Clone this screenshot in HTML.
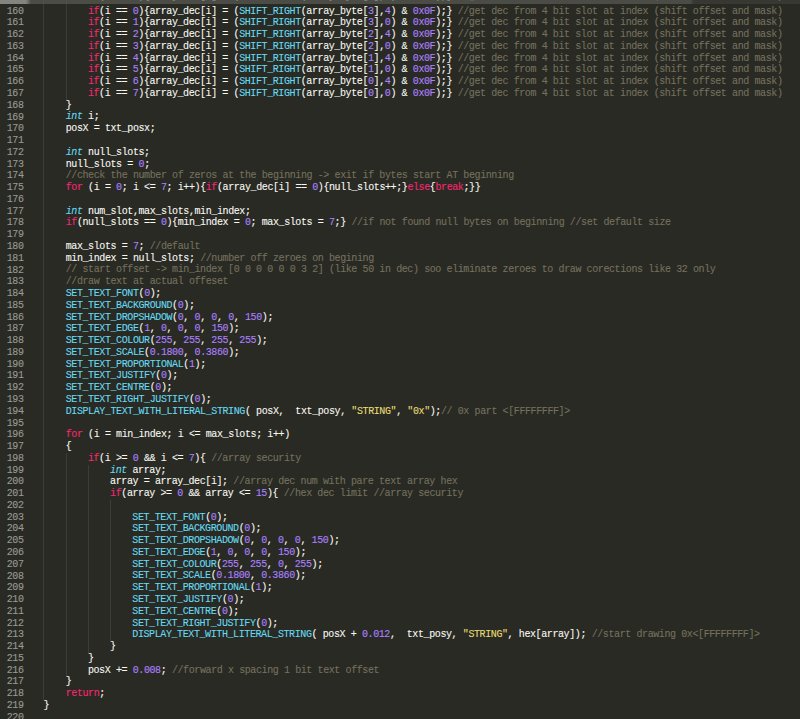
<!DOCTYPE html>
<html><head><meta charset="utf-8"><style>
html,body{margin:0;padding:0;}
body{width:800px;height:719px;overflow:hidden;background:#292a24;position:relative;font-family:"Liberation Mono",monospace;}
.top{position:absolute;left:0;top:0;width:800px;height:3.7px;background:linear-gradient(to right,rgba(135,135,129,0.97) 0px,rgba(135,135,129,0.97) 26px,rgba(89,89,83,0.72) 31px,rgba(89,89,83,0.72) 690px,rgba(89,89,83,0.3) 694px,rgba(89,89,83,0.3) 800px);}
.wrap{position:absolute;left:0;top:0px;width:800px;height:800px;}
.ln{position:absolute;left:0;width:23.5px;text-align:right;color:#9a9a94;font-size:10px;line-height:11.77px;height:11.77px;white-space:pre;letter-spacing:-0.400px;-webkit-text-stroke:0.1px currentColor;}
.cd{position:absolute;color:#f8f8f2;font-size:10px;line-height:11.77px;height:11.77px;white-space:pre;letter-spacing:-0.400px;-webkit-text-stroke:0.1px currentColor;}
.g{position:absolute;width:1px;height:11.77px;background:#3c3d37;}
.k{color:#f92672;}
.t{color:#66d9ef;font-style:italic;}
.f{color:#66d9ef;}
.d{color:#ae81ff;}
.s{color:#e6db74;}
.c{color:#75715e;}
.i{font-style:italic;}
</style></head>
<body><div class="wrap"><div class="g" style="top:-6.17px;left:43px"></div><div class="g" style="top:-6.17px;left:66px"></div><div class="g" style="top:5.60px;left:43px"></div><div class="g" style="top:5.60px;left:66px"></div><div class="g" style="top:17.37px;left:43px"></div><div class="g" style="top:17.37px;left:66px"></div><div class="g" style="top:29.14px;left:43px"></div><div class="g" style="top:29.14px;left:66px"></div><div class="g" style="top:40.91px;left:43px"></div><div class="g" style="top:40.91px;left:66px"></div><div class="g" style="top:52.68px;left:43px"></div><div class="g" style="top:52.68px;left:66px"></div><div class="g" style="top:64.45px;left:43px"></div><div class="g" style="top:64.45px;left:66px"></div><div class="g" style="top:76.22px;left:43px"></div><div class="g" style="top:76.22px;left:66px"></div><div class="g" style="top:87.99px;left:43px"></div><div class="g" style="top:87.99px;left:66px"></div><div class="g" style="top:99.76px;left:43px"></div><div class="g" style="top:111.53px;left:43px"></div><div class="g" style="top:123.30px;left:43px"></div><div class="g" style="top:135.07px;left:43px"></div><div class="g" style="top:146.84px;left:43px"></div><div class="g" style="top:158.61px;left:43px"></div><div class="g" style="top:170.38px;left:43px"></div><div class="g" style="top:182.15px;left:43px"></div><div class="g" style="top:193.92px;left:43px"></div><div class="g" style="top:205.69px;left:43px"></div><div class="g" style="top:217.46px;left:43px"></div><div class="g" style="top:229.23px;left:43px"></div><div class="g" style="top:241.00px;left:43px"></div><div class="g" style="top:252.77px;left:43px"></div><div class="g" style="top:264.54px;left:43px"></div><div class="g" style="top:276.31px;left:43px"></div><div class="g" style="top:288.08px;left:43px"></div><div class="g" style="top:299.85px;left:43px"></div><div class="g" style="top:311.62px;left:43px"></div><div class="g" style="top:323.39px;left:43px"></div><div class="g" style="top:335.16px;left:43px"></div><div class="g" style="top:346.93px;left:43px"></div><div class="g" style="top:358.70px;left:43px"></div><div class="g" style="top:370.47px;left:43px"></div><div class="g" style="top:382.24px;left:43px"></div><div class="g" style="top:394.01px;left:43px"></div><div class="g" style="top:405.78px;left:43px"></div><div class="g" style="top:417.55px;left:43px"></div><div class="g" style="top:429.32px;left:43px"></div><div class="g" style="top:441.09px;left:43px"></div><div class="g" style="top:452.86px;left:43px"></div><div class="g" style="top:452.86px;left:66px"></div><div class="g" style="top:464.63px;left:43px"></div><div class="g" style="top:464.63px;left:66px"></div><div class="g" style="top:464.63px;left:88px"></div><div class="g" style="top:476.40px;left:43px"></div><div class="g" style="top:476.40px;left:66px"></div><div class="g" style="top:476.40px;left:88px"></div><div class="g" style="top:488.17px;left:43px"></div><div class="g" style="top:488.17px;left:66px"></div><div class="g" style="top:488.17px;left:88px"></div><div class="g" style="top:499.94px;left:43px"></div><div class="g" style="top:499.94px;left:66px"></div><div class="g" style="top:499.94px;left:88px"></div><div class="g" style="top:499.94px;left:110px"></div><div class="g" style="top:511.71px;left:43px"></div><div class="g" style="top:511.71px;left:66px"></div><div class="g" style="top:511.71px;left:88px"></div><div class="g" style="top:511.71px;left:110px"></div><div class="g" style="top:523.48px;left:43px"></div><div class="g" style="top:523.48px;left:66px"></div><div class="g" style="top:523.48px;left:88px"></div><div class="g" style="top:523.48px;left:110px"></div><div class="g" style="top:535.25px;left:43px"></div><div class="g" style="top:535.25px;left:66px"></div><div class="g" style="top:535.25px;left:88px"></div><div class="g" style="top:535.25px;left:110px"></div><div class="g" style="top:547.02px;left:43px"></div><div class="g" style="top:547.02px;left:66px"></div><div class="g" style="top:547.02px;left:88px"></div><div class="g" style="top:547.02px;left:110px"></div><div class="g" style="top:558.79px;left:43px"></div><div class="g" style="top:558.79px;left:66px"></div><div class="g" style="top:558.79px;left:88px"></div><div class="g" style="top:558.79px;left:110px"></div><div class="g" style="top:570.56px;left:43px"></div><div class="g" style="top:570.56px;left:66px"></div><div class="g" style="top:570.56px;left:88px"></div><div class="g" style="top:570.56px;left:110px"></div><div class="g" style="top:582.33px;left:43px"></div><div class="g" style="top:582.33px;left:66px"></div><div class="g" style="top:582.33px;left:88px"></div><div class="g" style="top:582.33px;left:110px"></div><div class="g" style="top:594.10px;left:43px"></div><div class="g" style="top:594.10px;left:66px"></div><div class="g" style="top:594.10px;left:88px"></div><div class="g" style="top:594.10px;left:110px"></div><div class="g" style="top:605.87px;left:43px"></div><div class="g" style="top:605.87px;left:66px"></div><div class="g" style="top:605.87px;left:88px"></div><div class="g" style="top:605.87px;left:110px"></div><div class="g" style="top:617.64px;left:43px"></div><div class="g" style="top:617.64px;left:66px"></div><div class="g" style="top:617.64px;left:88px"></div><div class="g" style="top:617.64px;left:110px"></div><div class="g" style="top:629.41px;left:43px"></div><div class="g" style="top:629.41px;left:66px"></div><div class="g" style="top:629.41px;left:88px"></div><div class="g" style="top:629.41px;left:110px"></div><div class="g" style="top:641.18px;left:43px"></div><div class="g" style="top:641.18px;left:66px"></div><div class="g" style="top:641.18px;left:88px"></div><div class="g" style="top:652.95px;left:43px"></div><div class="g" style="top:652.95px;left:66px"></div><div class="g" style="top:664.72px;left:43px"></div><div class="g" style="top:664.72px;left:66px"></div><div class="g" style="top:676.49px;left:43px"></div><div class="g" style="top:688.26px;left:43px"></div><div class="ln" style="top:-8.67px">159</div><div class="cd" style="top:-8.77px;left:87.90px"><span class="k">if</span>(i == <span class="d">0</span>){array_dec[i] = (<span class="f">SHIFT_RIGHT</span>(array_byte[<span class="d">3</span>],<span class="d">4</span>) &amp; <span class="d">0x0F</span>);} <span class="c">//get dec from 4 bit slot at index (shift offset and mask)</span></div><div class="ln" style="top:5.60px">160</div><div class="cd" style="top:5.50px;left:87.90px"><span class="k">if</span>(i == <span class="d">0</span>){array_dec[i] = (<span class="f">SHIFT_RIGHT</span>(array_byte[<span class="d">3</span>],<span class="d">4</span>) &amp; <span class="d">0x0F</span>);} <span class="c">//get dec from 4 bit slot at index (shift offset and mask)</span></div><div class="ln" style="top:17.37px">161</div><div class="cd" style="top:17.27px;left:87.90px"><span class="k">if</span>(i == <span class="d">1</span>){array_dec[i] = (<span class="f">SHIFT_RIGHT</span>(array_byte[<span class="d">3</span>],<span class="d">0</span>) &amp; <span class="d">0x0F</span>);} <span class="c">//get dec from 4 bit slot at index (shift offset and mask)</span></div><div class="ln" style="top:29.14px">162</div><div class="cd" style="top:29.04px;left:87.90px"><span class="k">if</span>(i == <span class="d">2</span>){array_dec[i] = (<span class="f">SHIFT_RIGHT</span>(array_byte[<span class="d">2</span>],<span class="d">4</span>) &amp; <span class="d">0x0F</span>);} <span class="c">//get dec from 4 bit slot at index (shift offset and mask)</span></div><div class="ln" style="top:40.91px">163</div><div class="cd" style="top:40.81px;left:87.90px"><span class="k">if</span>(i == <span class="d">3</span>){array_dec[i] = (<span class="f">SHIFT_RIGHT</span>(array_byte[<span class="d">2</span>],<span class="d">0</span>) &amp; <span class="d">0x0F</span>);} <span class="c">//get dec from 4 bit slot at index (shift offset and mask)</span></div><div class="ln" style="top:52.68px">164</div><div class="cd" style="top:52.58px;left:87.90px"><span class="k">if</span>(i == <span class="d">4</span>){array_dec[i] = (<span class="f">SHIFT_RIGHT</span>(array_byte[<span class="d">1</span>],<span class="d">4</span>) &amp; <span class="d">0x0F</span>);} <span class="c">//get dec from 4 bit slot at index (shift offset and mask)</span></div><div class="ln" style="top:64.45px">165</div><div class="cd" style="top:64.35px;left:87.90px"><span class="k">if</span>(i == <span class="d">5</span>){array_dec[i] = (<span class="f">SHIFT_RIGHT</span>(array_byte[<span class="d">1</span>],<span class="d">0</span>) &amp; <span class="d">0x0F</span>);} <span class="c">//get dec from 4 bit slot at index (shift offset and mask)</span></div><div class="ln" style="top:76.22px">166</div><div class="cd" style="top:76.12px;left:87.90px"><span class="k">if</span>(i == <span class="d">6</span>){array_dec[i] = (<span class="f">SHIFT_RIGHT</span>(array_byte[<span class="d">0</span>],<span class="d">4</span>) &amp; <span class="d">0x0F</span>);} <span class="c">//get dec from 4 bit slot at index (shift offset and mask)</span></div><div class="ln" style="top:87.99px">167</div><div class="cd" style="top:87.89px;left:87.90px"><span class="k">if</span>(i == <span class="d">7</span>){array_dec[i] = (<span class="f">SHIFT_RIGHT</span>(array_byte[<span class="d">0</span>],<span class="d">0</span>) &amp; <span class="d">0x0F</span>);} <span class="c">//get dec from 4 bit slot at index (shift offset and mask)</span></div><div class="ln" style="top:99.76px">168</div><div class="cd" style="top:99.66px;left:65.70px">}</div><div class="ln" style="top:111.53px">169</div><div class="cd" style="top:111.43px;left:65.70px"><span class="t">int</span> i;</div><div class="ln" style="top:123.30px">170</div><div class="cd" style="top:123.20px;left:65.70px">posX = txt_posx;</div><div class="ln" style="top:135.07px">171</div><div class="ln" style="top:146.84px">172</div><div class="cd" style="top:146.74px;left:65.70px"><span class="t">int</span> null_slots;</div><div class="ln" style="top:158.61px">173</div><div class="cd" style="top:158.51px;left:65.70px">null_slots = <span class="d">0</span>;</div><div class="ln" style="top:170.38px">174</div><div class="cd" style="top:170.28px;left:65.70px"><span class="c">//check the number of zeros at the beginning -&gt; exit if bytes start AT beginning</span></div><div class="ln" style="top:182.15px">175</div><div class="cd" style="top:182.05px;left:65.70px"><span class="k">for</span> (i = <span class="d">0</span>; i &lt;= <span class="d">7</span>; i++){<span class="k">if</span>(array_dec[i] == <span class="d">0</span>){null_slots++;}<span class="k">else</span>{<span class="k">break</span>;}}</div><div class="ln" style="top:193.92px">176</div><div class="ln" style="top:205.69px">177</div><div class="cd" style="top:205.59px;left:65.70px"><span class="t">int</span> num_slot,max_slots,min_index;</div><div class="ln" style="top:217.46px">178</div><div class="cd" style="top:217.36px;left:65.70px"><span class="k">if</span>(null_slots == <span class="d">0</span>){min_index = <span class="d">0</span>; max_slots = <span class="d">7</span>;} <span class="c">//if not found null bytes on beginning //set default size</span></div><div class="ln" style="top:229.23px">179</div><div class="ln" style="top:241.00px">180</div><div class="cd" style="top:240.90px;left:65.70px">max_slots = <span class="d">7</span>; <span class="c">//default</span></div><div class="ln" style="top:252.77px">181</div><div class="cd" style="top:252.67px;left:65.70px">min_index = null_slots; <span class="c">//number off zeroes on begining</span></div><div class="ln" style="top:264.54px">182</div><div class="cd" style="top:264.44px;left:65.70px"><span class="c">// start offset -&gt; min_index [0 0 0 0 0 0 3 2] (like 50 in dec) soo eliminate zeroes to draw corections like 32 only</span></div><div class="ln" style="top:276.31px">183</div><div class="cd" style="top:276.21px;left:65.70px"><span class="c">//draw text at actual offeset</span></div><div class="ln" style="top:288.08px">184</div><div class="cd" style="top:287.98px;left:65.70px"><span class="f">SET_TEXT_FONT</span>(<span class="d">0</span>);</div><div class="ln" style="top:299.85px">185</div><div class="cd" style="top:299.75px;left:65.70px"><span class="f">SET_TEXT_BACKGROUND</span>(<span class="d">0</span>);</div><div class="ln" style="top:311.62px">186</div><div class="cd" style="top:311.52px;left:65.70px"><span class="f">SET_TEXT_DROPSHADOW</span>(<span class="d">0</span>, <span class="d">0</span>, <span class="d">0</span>, <span class="d">0</span>, <span class="d">150</span>);</div><div class="ln" style="top:323.39px">187</div><div class="cd" style="top:323.29px;left:65.70px"><span class="f">SET_TEXT_EDGE</span>(<span class="d">1</span>, <span class="d">0</span>, <span class="d">0</span>, <span class="d">0</span>, <span class="d">150</span>);</div><div class="ln" style="top:335.16px">188</div><div class="cd" style="top:335.06px;left:65.70px"><span class="f">SET_TEXT_COLOUR</span>(<span class="d">255</span>, <span class="d">255</span>, <span class="d">255</span>, <span class="d">255</span>);</div><div class="ln" style="top:346.93px">189</div><div class="cd" style="top:346.83px;left:65.70px"><span class="f">SET_TEXT_SCALE</span>(<span class="d">0.1800</span>, <span class="d">0.3860</span>);</div><div class="ln" style="top:358.70px">190</div><div class="cd" style="top:358.60px;left:65.70px"><span class="f">SET_TEXT_PROPORTIONAL</span>(<span class="d">1</span>);</div><div class="ln" style="top:370.47px">191</div><div class="cd" style="top:370.37px;left:65.70px"><span class="f">SET_TEXT_JUSTIFY</span>(<span class="d">0</span>);</div><div class="ln" style="top:382.24px">192</div><div class="cd" style="top:382.14px;left:65.70px"><span class="f">SET_TEXT_CENTRE</span>(<span class="d">0</span>);</div><div class="ln" style="top:394.01px">193</div><div class="cd" style="top:393.91px;left:65.70px"><span class="f">SET_TEXT_RIGHT_JUSTIFY</span>(<span class="d">0</span>);</div><div class="ln" style="top:405.78px">194</div><div class="cd" style="top:405.68px;left:65.70px"><span class="f">DISPLAY_TEXT_WITH_LITERAL_STRING</span>( posX,  txt_posy, <span class="s">&quot;STRING&quot;</span>, <span class="s">&quot;0x&quot;</span>);<span class="c">// 0x part &lt;[FFFFFFFF]&gt;</span></div><div class="ln" style="top:417.55px">195</div><div class="ln" style="top:429.32px">196</div><div class="cd" style="top:429.22px;left:65.70px"><span class="k">for</span> (i = min_index; i &lt;= max_slots; i++)</div><div class="ln" style="top:441.09px">197</div><div class="cd" style="top:440.99px;left:65.70px">{</div><div class="ln" style="top:452.86px">198</div><div class="cd" style="top:452.76px;left:87.90px"><span class="k">if</span>(i &gt;= <span class="d">0</span> &amp;&amp; i &lt;= <span class="d">7</span>){ <span class="c">//array security</span></div><div class="ln" style="top:464.63px">199</div><div class="cd" style="top:464.53px;left:110.10px"><span class="t">int</span> array;</div><div class="ln" style="top:476.40px">200</div><div class="cd" style="top:476.30px;left:110.10px">array = array_dec[i]; <span class="c">//array dec num with pare text array hex</span></div><div class="ln" style="top:488.17px">201</div><div class="cd" style="top:488.07px;left:110.10px"><span class="k">if</span>(array &gt;= <span class="d">0</span> &amp;&amp; array &lt;= <span class="d">15</span>){ <span class="c">//hex dec limit //array security</span></div><div class="ln" style="top:499.94px">202</div><div class="ln" style="top:511.71px">203</div><div class="cd" style="top:511.61px;left:132.30px"><span class="f">SET_TEXT_FONT</span>(<span class="d">0</span>);</div><div class="ln" style="top:523.48px">204</div><div class="cd" style="top:523.38px;left:132.30px"><span class="f">SET_TEXT_BACKGROUND</span>(<span class="d">0</span>);</div><div class="ln" style="top:535.25px">205</div><div class="cd" style="top:535.15px;left:132.30px"><span class="f">SET_TEXT_DROPSHADOW</span>(<span class="d">0</span>, <span class="d">0</span>, <span class="d">0</span>, <span class="d">0</span>, <span class="d">150</span>);</div><div class="ln" style="top:547.02px">206</div><div class="cd" style="top:546.92px;left:132.30px"><span class="f">SET_TEXT_EDGE</span>(<span class="d">1</span>, <span class="d">0</span>, <span class="d">0</span>, <span class="d">0</span>, <span class="d">150</span>);</div><div class="ln" style="top:558.79px">207</div><div class="cd" style="top:558.69px;left:132.30px"><span class="f">SET_TEXT_COLOUR</span>(<span class="d">255</span>, <span class="d">255</span>, <span class="d">0</span>, <span class="d">255</span>);</div><div class="ln" style="top:570.56px">208</div><div class="cd" style="top:570.46px;left:132.30px"><span class="f">SET_TEXT_SCALE</span>(<span class="d">0.1800</span>, <span class="d">0.3860</span>);</div><div class="ln" style="top:582.33px">209</div><div class="cd" style="top:582.23px;left:132.30px"><span class="f">SET_TEXT_PROPORTIONAL</span>(<span class="d">1</span>);</div><div class="ln" style="top:594.10px">210</div><div class="cd" style="top:594.00px;left:132.30px"><span class="f">SET_TEXT_JUSTIFY</span>(<span class="d">0</span>);</div><div class="ln" style="top:605.87px">211</div><div class="cd" style="top:605.77px;left:132.30px"><span class="f">SET_TEXT_CENTRE</span>(<span class="d">0</span>);</div><div class="ln" style="top:617.64px">212</div><div class="cd" style="top:617.54px;left:132.30px"><span class="f">SET_TEXT_RIGHT_JUSTIFY</span>(<span class="d">0</span>);</div><div class="ln" style="top:629.41px">213</div><div class="cd" style="top:629.31px;left:132.30px"><span class="f">DISPLAY_TEXT_WITH_LITERAL_STRING</span>( posX + <span class="d">0.012</span>,  txt_posy, <span class="s">&quot;STRING&quot;</span>, hex[array]); <span class="c">//start drawing 0x&lt;[FFFFFFFF]&gt;</span></div><div class="ln" style="top:641.18px">214</div><div class="cd" style="top:641.08px;left:110.10px">}</div><div class="ln" style="top:652.95px">215</div><div class="cd" style="top:652.85px;left:87.90px">}</div><div class="ln" style="top:664.72px">216</div><div class="cd" style="top:664.62px;left:87.90px">posX += <span class="d">0.008</span>; <span class="c">//forward x spacing 1 bit text offset</span></div><div class="ln" style="top:676.49px">217</div><div class="cd" style="top:676.39px;left:65.70px">}</div><div class="ln" style="top:688.26px">218</div><div class="cd" style="top:688.16px;left:65.70px"><span class="k">return</span>;</div><div class="ln" style="top:700.03px">219</div><div class="cd" style="top:699.93px;left:43.50px">}</div><div class="ln" style="top:711.80px">220</div></div><div class="top"></div></body></html>
